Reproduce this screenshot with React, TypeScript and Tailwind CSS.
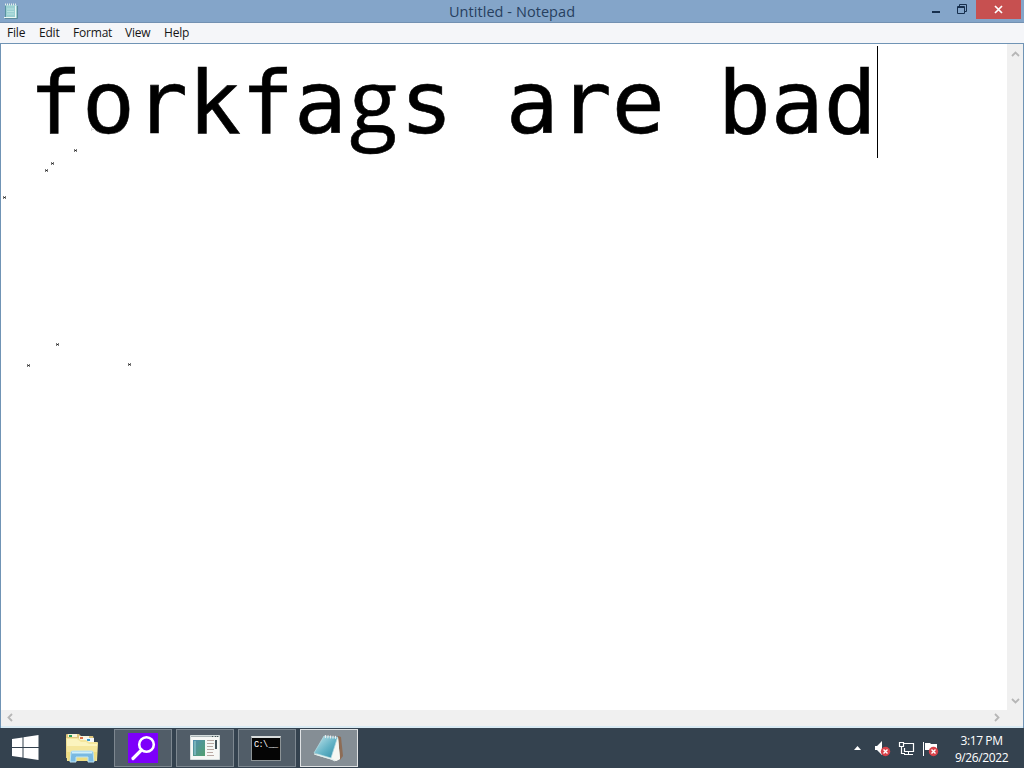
import { Fragment } from "react";
import { clsx } from "clsx";

const menuItems = [
    { label: "File", width: "w-8" },
    { label: "Edit", width: "w-[34px]" },
    { label: "Format", width: "w-[52px]" },
    { label: "View", width: "w-[39px]" },
    { label: "Help", width: "w-10" },
];

// Top-left corner of each stray mark on the page
const specks = [
    [74, 149],
    [51, 162],
    [45, 169],
    [3, 196],
    [56, 343],
    [27, 364],
    [128, 363],
];

function NotepadSmallIcon() {
    return (
        <svg width="17" height="18" viewBox="0 0 17 18">
            <path d="M3 3h12v13H3z" fill="#9bd0d2" />
            <path d="M3 3h1v13H3z" fill="#5a93a0" />
            <path d="M5 7h7M5 9.500h7M5 12h7" stroke="#b9e2e0" />
            <path d="M13.500 4v12M2 15.500h12" stroke="#eef7f2" />
            <path d="M15.500 4v12.500H3" stroke="#5d8c9c" fill="none" />
            <path d="M3 2.500h12" stroke="#e3efec" strokeWidth="2" strokeDasharray="1 1" />
        </svg>
    );
}

function TitleBar() {
    return (
        <header className="relative flex h-[23px] shrink-0 items-start justify-between border-b border-[#7391b2] bg-[#84a5c9]">
            <div className="pt-[2px] pl-[2px]">
                <NotepadSmallIcon />
            </div>
            <h1 className="absolute inset-x-0 top-0 text-center text-[14.5px] leading-[23px] tracking-[0.06px] text-[#27405f]">
                Untitled - Notepad
            </h1>
            <div className="flex">
                <svg width="52" height="19" viewBox="0 0 52 19" fill="none" stroke="#172f4d">
                    <path d="M8 12h8" strokeWidth="2" />
                    <path d="M33.500 6.500h7v7h-7zM33 7.500h8" />
                    <path d="M35.500 6V4.500h7v7H41" />
                </svg>
                <div className="mr-[3px] flex h-[19px] w-[45px] items-center justify-center bg-[#c75050]">
                    <svg width="9" height="9" viewBox="0 0 9 9">
                        <path d="M1 1l7 7M8 1L1 8" stroke="#fff" strokeWidth="1.700" />
                    </svg>
                </div>
            </div>
        </header>
    );
}

function MenuBar() {
    return (
        <nav className="flex h-5 shrink-0 bg-[#f5f6f9] pl-[7px] text-[12px] leading-5 tracking-[-0.2px] text-[#151515]">
            {menuItems.map((item) => (
                <span key={item.label} className={clsx("whitespace-nowrap", item.width)}>{item.label}</span>
            ))}
        </nav>
    );
}

function Chevron({ d }: { d: string }) {
    return (
        <svg width="9" height="9" viewBox="0 0 9 9" fill="none">
            <path d={d} stroke="#b6b6b6" strokeWidth="1.800" />
        </svg>
    );
}

function Editor() {
    return (
        <main className="flex min-h-0 flex-1 flex-col border-x border-t border-[#7094b5] bg-white">
            <div className="flex min-h-0 flex-1">
                <div className="relative flex-1 pt-[2px] pl-7">
                    <div className="flex">
                        <p className="h-28 w-[848px] shrink-0 font-['DejaVu_Sans_Mono',monospace] text-[88px] leading-[107px] whitespace-pre text-black [-webkit-text-stroke:0.6px_black]">
                            forkfa<span className="inline-block h-[107px] w-[53px] text-center align-baseline font-['Open_Sans',sans-serif] text-[87px]">g</span>s are bad
                        </p>
                        <div className="h-28 w-px bg-black" />
                    </div>
                    <svg className="absolute -top-11 -left-px" width="180" height="400" viewBox="0 0 180 400">
                        {specks.map(([x, y]) => (
                            <Fragment key={`${x}-${y}`}>
                                <path d={`M${x} ${y}h1v3h-1zM${x + 2} ${y}h1v3h-1z`} fill="#777" />
                                <path d={`M${x + 1} ${y + 1}h1v1h-1z`} fill="#222" />
                            </Fragment>
                        ))}
                        <path d="M91.500 131v-3M93.500 130v-2M92 129.500h3" stroke="#ddd" fill="none" />
                    </svg>
                </div>
                <div className="flex w-4 flex-col items-center justify-between bg-[#f0f0f0] pt-[6px] pb-[5px]">
                    <Chevron d="M1 6l3.500-3.500L8 6" />
                    <Chevron d="M1 3l3.500 3.500L8 3" />
                </div>
            </div>
            <div className="flex h-[15px] shrink-0 items-center justify-between bg-[#f0f0f0] pr-[22px] pl-[5px]">
                <Chevron d="M6 1L2.500 4.500L6 8" />
                <Chevron d="M3 1l3.500 3.500L3 8" />
            </div>
            <div className="h-[3px] shrink-0 border-t border-[#f0f0f0] bg-[#d9eaf3]" />
        </main>
    );
}

function WindowsIcon() {
    return (
        <svg width="28" height="28" viewBox="0 0 28 28" fill="#fff">
            <path d="M1 5l10.500-1.600V13H1zM12.500 3.200L27.500 1v12h-15zM1 14h10.500v9.600L1 22zM12.500 14h15v12l-15-2.200z" />
        </svg>
    );
}

function FolderIcon() {
    return (
        <svg width="34" height="32" viewBox="0 0 34 32">
            <path d="M1 3q0-1 1-1h12l2 2h12l1 3v19H1z" fill="#e0c67c" />
            <path d="M3 2h9v3H3z" fill="#f8f4d8" />
            <path d="M4 3h3v2H4z" fill="#25a053" />
            <path d="M14 4h10v4H14z" fill="#faf6e0" />
            <path d="M15 5h3v2h-3z" fill="#db7048" />
            <path d="M20 6h9v4h-9z" fill="#f5f9fb" />
            <path d="M22 7h3v2h-3z" fill="#3499cf" />
            <path d="M1 6h12l3 2h5l3 2h8q1 0 1 1l-1 18H2z" fill="#f4e69c" />
            <path d="M2 7h10l4 3h5l3 2h8v2H2z" fill="#fbf4be" />
            <path d="M2 20h30l-1 9H3z" fill="#eddd82" />
            <path d="M5 30l1-10q0-1 2-1h18q2 0 2 1l1 10h-6v-5H11v5z" fill="#79b9e2" stroke="#bee5f4" />
            <path d="M7 20.500h20" stroke="#d0effa" strokeWidth="2" />
        </svg>
    );
}

function SearchAppIcon() {
    return (
        <svg width="30" height="30" viewBox="0 0 30 30">
            <path d="M0 0h30v30H0z" fill="#7d00fa" />
            <circle cx="18.500" cy="11.500" r="7.300" fill="none" stroke="#fff" strokeWidth="2.600" />
            <path d="M13.500 17L5 25.500" stroke="#fff" strokeWidth="3.200" strokeLinecap="round" />
        </svg>
    );
}

function DocumentAppIcon() {
    return (
        <svg width="30" height="26" viewBox="0 0 30 26">
            <defs>
                <linearGradient id="preview" x2="1" y2="1">
                    <stop stopColor="#518eb1" />
                    <stop offset="1" stopColor="#51a06f" />
                </linearGradient>
            </defs>
            <path d="M.5.500h29v24H.5z" fill="#f6f8f6" stroke="#d4dddd" />
            <path d="M1 1.500h28" stroke="#aab5b7" />
            <path d="M22 1.500h1M25 1.500h1M27 1.500h1" stroke="#455" />
            <path d="M3 5h12v16H3z" fill="url(#preview)" />
            <path d="M4 6h2v14H4z" fill="#75b2b9" />
            <path d="M17 5.500h7M17 8.500h7M17 11.500h6M17 14.500h7M17 17.500h6M17 20.500h7" stroke="#b9a9a3" />
            <path d="M26 5v9" stroke="#44535a" strokeWidth="2" />
        </svg>
    );
}

function CommandIcon() {
    return (
        <div className="mr-[2px] h-[25px] w-[30px] border border-t-2 border-[#8d9497] border-t-[#d9dddd] bg-[#050505] pt-[2px] pl-[2px]">
            <span className="block font-['Liberation_Mono',monospace] text-[8.5px] leading-[11px] tracking-[-0.6px] whitespace-nowrap text-white">
                C:\<span className="ml-px">__</span>
            </span>
        </div>
    );
}

function NotepadIcon() {
    return (
        <svg width="32" height="30" viewBox="0 0 32 30">
            <defs>
                <linearGradient id="cover" x2="1" y2="1">
                    <stop stopColor="#c7e8ee" />
                    <stop offset=".55" stopColor="#64b3c6" />
                    <stop offset="1" stopColor="#2d8ba5" />
                </linearGradient>
            </defs>
            <path d="M25 3l3 1 2 19-3 4-3-2z" fill="#8d6c55" />
            <path d="M25 4l2 22-4 2L3 22z" fill="#e9efed" />
            <path d="M25 4l2 22-4 2-5-3z" fill="#f7f7f2" />
            <path d="M11 3l13.500 1.500L18 25 1 20z" fill="url(#cover)" stroke="#b8dce4" strokeWidth=".7" />
            <path d="M12 3.500l12 1" stroke="#eee" strokeWidth="3" strokeDasharray="1 1.500" />
            <path d="M1 21l17 5 4 2" stroke="#e3f1ef" fill="none" />
        </svg>
    );
}

const runningApps = [
    { name: "search", icon: <SearchAppIcon />, active: false },
    { name: "documents", icon: <DocumentAppIcon />, active: false },
    { name: "command", icon: <CommandIcon />, active: false },
    { name: "notepad", icon: <NotepadIcon />, active: true },
];

function ErrorBadge({ x, y }: { x: number; y: number }) {
    return (
        <g transform={`translate(${x} ${y})`}>
            <circle cx="4.500" cy="4.500" r="4.700" fill="#d9424a" />
            <path d="M2.500 2.500l4 4M6.500 2.500l-4 4" stroke="#fff" strokeWidth="1.400" />
        </g>
    );
}

function Tray() {
    return (
        <div className="flex h-10 items-center text-white">
            <svg width="94" height="20" viewBox="0 0 94 20" fill="none">
                <path d="M3 12l3.500-4L10 12z" fill="#fff" />
                <path d="M24 8h2l5-5v14l-5-5h-2z" fill="#fff" />
                <ErrorBadge x={30} y={9} />
                <path d="M53 5.500h9.500v8h-9" stroke="#fff" strokeWidth="1.200" />
                <path d="M57.500 14v3M53 16.500h9" stroke="#fff" />
                <path d="M48.500 4.500h4v4h-4zM50.500 9v6.500H54M53.500 10v4" stroke="#fff" strokeWidth="1.200" />
                <path d="M72.500 4v14" stroke="#fff" />
                <path d="M74 5h5l1 1h6v7h-6l-1-1h-5z" fill="#fff" />
                <ErrorBadge x={78} y={9} />
            </svg>
            <div className="w-[72px] pt-px pl-px text-center text-[12px] leading-[17px] tracking-[-0.4px] whitespace-nowrap">
                <div>3:17 PM</div>
                <div>9/26/2022</div>
            </div>
            <div className="w-[7px]" />
        </div>
    );
}

function Taskbar() {
    return (
        <footer className="flex h-10 shrink-0 items-stretch bg-[#34424f]">
            <div className="flex w-[50px] items-center justify-center">
                <WindowsIcon />
            </div>
            <div className="flex w-16 items-center justify-center pr-px">
                <FolderIcon />
            </div>
            <div className="flex gap-1 pt-px pb-px">
                {runningApps.map((app) => (
                    <div
                        key={app.name}
                        className={clsx(
                            "flex w-[58px] items-center justify-center border",
                            app.active ? "border-[#dfe2e4] bg-[#858e95]" : "border-[#7d8790] bg-[#515d68]"
                        )}
                    >
                        {app.icon}
                    </div>
                ))}
            </div>
            <div className="flex-1" />
            <Tray />
        </footer>
    );
}

export default function App() {
    return (
        <div className="flex h-[768px] w-[1024px] flex-col overflow-hidden bg-white font-['Open_Sans',sans-serif]">
            <TitleBar />
            <MenuBar />
            <Editor />
            <Taskbar />
        </div>
    );
}
